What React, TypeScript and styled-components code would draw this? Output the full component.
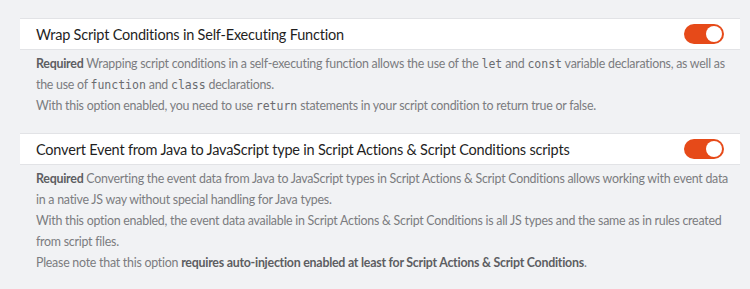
import * as React from 'react';

import styled, { createGlobalStyle } from 'styled-components';

interface IToggle {
    checked?: boolean;
}

interface ISetting {
    title: string;
    children: React.ReactNode;
}

const GlobalStyle = createGlobalStyle`
    html,
    body {
        margin: 0;
        padding: 0;
        background-color: #f1f2f4;
    }

    body {
        font-family: Lato, 'Noto Sans', sans-serif;
    }
`;

const Setting = (props: ISetting) => {
    return (
        <Section>
            <Row>
                <Title>{props.title}</Title>
                <Toggle checked />
            </Row>
            <Footer>{props.children}</Footer>
        </Section>
    );
};

const App = () => {
    return (
        <Page>
            <GlobalStyle />
            <Setting title="Wrap Script Conditions in Self-Executing Function">
                <Line>
                    <strong>Required</strong> Wrapping script conditions in a self-executing function allows the
                    use of the <Code>let</Code> and <Code>const</Code> variable declarations, as well as
                </Line>
                <Line>
                    the use of <Code>function</Code> and <Code>class</Code> declarations.
                </Line>
                <Line>
                    With this option enabled, you need to use <Code>return</Code> statements in your script
                    condition to return true or false.
                </Line>
            </Setting>
            <Setting title="Convert Event from Java to JavaScript type in Script Actions & Script Conditions scripts">
                <Line>
                    <strong>Required</strong> Converting the event data from Java to JavaScript types in Script
                    Actions &amp; Script Conditions allows working with event data
                </Line>
                <Line>in a native JS way without special handling for Java types.</Line>
                <Line>
                    With this option enabled, the event data available in Script Actions &amp; Script Conditions
                    is all JS types and the same as in rules created
                </Line>
                <Line>from script files.</Line>
                <Line>
                    Please note that this option{' '}
                    <strong>requires auto-injection enabled at least for Script Actions &amp; Script Conditions</strong>.
                </Line>
            </Setting>
        </Page>
    );
};

export default App;

const Page = styled.div`
    padding: 18px 10px 0 20px;
`;

const Section = styled.div`
    width: 720px;
    margin-bottom: 17px;
`;

const Row = styled.div`
    display: flex;
    justify-content: space-between;
    align-items: center;

    height: 30px;
    padding: 0 16px;

    background-color: #ffffff;
    border-top: 1px solid #e2e3e6;
    border-bottom: 1px solid #e2e3e6;
`;

const Title = styled.div`
    font-size: 14.5px;
    letter-spacing: -0.2px;
    color: #1f1f1f;
    white-space: nowrap;
`;

const Toggle = styled.div<IToggle>`
    position: relative;
    flex-shrink: 0;

    width: 40px;
    height: 20px;
    border-radius: 10px;

    background-color: ${(props) => (props.checked ? '#e64a19' : '#d5d5d5')};

    &::after {
        content: '';
        position: absolute;
        top: 2px;
        left: ${(props) => (props.checked ? '22px' : '2px')};

        width: 16px;
        height: 16px;
        border-radius: 50%;

        background-color: #ffffff;
    }
`;

const Footer = styled.div`
    padding: 3px 7px 0 16px;

    font-size: 12.4px;
    letter-spacing: -0.25px;
    line-height: 21px;
    color: #7b7c80;

    strong {
        font-weight: 700;
        color: #5d5e62;
    }
`;

const Line = styled.div`
    white-space: nowrap;
`;

const Code = styled.code`
    font-family: 'DejaVu Sans Mono', monospace;
    font-size: 11.5px;
    letter-spacing: 0;
    line-height: 1;
    color: #6a6b6f;
`;
